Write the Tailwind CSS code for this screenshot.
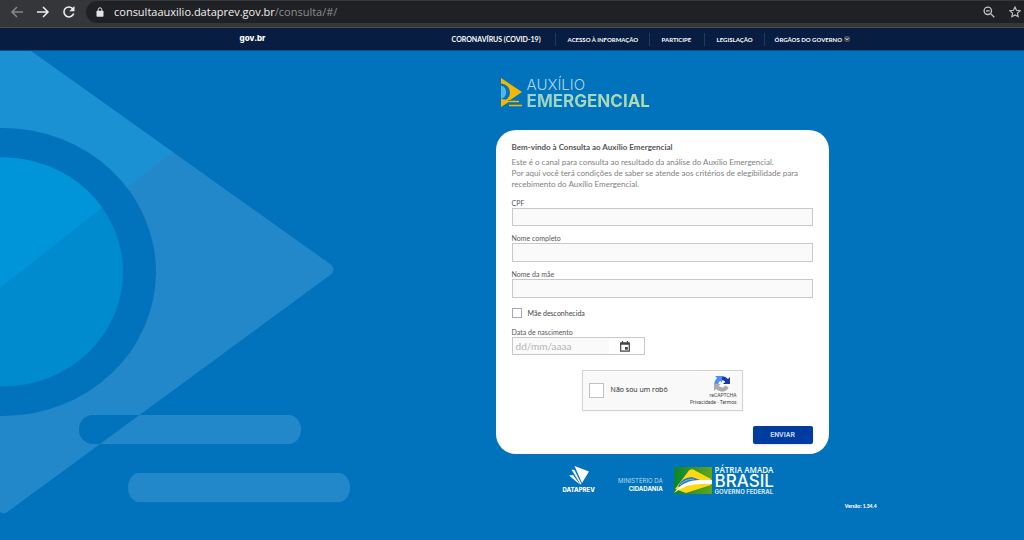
<!DOCTYPE html>
<html lang="pt-BR">
<head>
<meta charset="utf-8">
<title>Consulta Auxílio Emergencial</title>
<script src="https://cdn.jsdelivr.net/npm/@tailwindcss/browser@4"></script>
</head>
<body class="flex min-h-screen flex-col bg-[#0073bc] font-['Lato',sans-serif] text-[#555]">
<!-- Browser toolbar -->
<div class="flex h-7 shrink-0 items-center border-b border-[#4a4b4e] bg-[#35363a] pb-1 pl-2.5">
  <div class="flex w-[76px] shrink-0 items-center gap-3">
    <button aria-label="Voltar" class="text-[#85878a]"><svg class="h-3.5 w-3.5" viewBox="0 0 14 14" fill="none" stroke="currentColor" stroke-width="1.5"><path d="M13 7H2M7 2L2 7l5 5"/></svg></button>
    <button aria-label="Avançar" class="text-[#eeeeef]"><svg class="h-3.5 w-3.5" viewBox="0 0 14 14" fill="none" stroke="currentColor" stroke-width="1.5"><path d="M1 7h11M7 2l5 5-5 5"/></svg></button>
    <button aria-label="Recarregar" class="text-[#eeeeef]"><svg class="h-3.5 w-3.5" viewBox="0 0 14 14"><path d="M11 4A5 5 0 1 0 11.700 8.500" fill="none" stroke="currentColor" stroke-width="1.600"/><path d="M12.500 1v5.200H7.300z" fill="currentColor"/></svg></button>
  </div>
  <div class="flex h-[22px] flex-1 items-center gap-2.5 rounded-l-full bg-[#202124] pl-2.5 pr-[3px]">
    <svg class="h-2.5 w-2 shrink-0 text-[#e3e4e6]" viewBox="0 0 8 10"><path d="M2.200 4V2.600a1.800 1.800 0 0 1 3.600 0V4" fill="none" stroke="currentColor"/><rect x="0.500" y="3.700" width="7" height="6" rx="0.800" fill="currentColor"/></svg>
    <p class="flex-1 font-['Open_Sans',sans-serif] text-[11px] leading-4 text-[#8b8d91]"><span class="text-[#f1f1f2]">consultaauxilio.dataprev.gov.br</span>/consulta/#/</p>
    <button aria-label="Zoom" class="mr-1 text-[#c2c4c7]"><svg class="h-3 w-3" viewBox="0 0 12 12" fill="none" stroke="currentColor" stroke-width="1.300"><circle cx="4.800" cy="4.800" r="3.700"/><path d="M7.600 7.600L11.300 11.300M3 4.800h3.600"/></svg></button>
    <button aria-label="Favoritar" class="text-[#c2c4c7]"><svg class="h-3 w-3" viewBox="0 0 12 12" fill="none" stroke="currentColor" stroke-width="1.100"><path d="M6 1l1.500 3.300 3.600.4-2.700 2.400.8 3.600L6 8.900l-3.200 1.800.8-3.600L.9 4.700l3.600-.4z"/></svg></button>
  </div>
</div>

<!-- Government bar -->
<header class="flex h-[23px] shrink-0 items-center border-b border-[#05508e] bg-[#071d41] pl-[23.4%] text-white">
  <a href="#" class="w-[212px] shrink-0 pb-0.5 font-['Inter',sans-serif] text-[8px] font-extrabold">gov.br</a>
  <nav class="flex items-center text-[6px] font-bold whitespace-nowrap">
    <a href="#" class="w-[103px] text-[7px]">CORONAVÍRUS (COVID-19)</a>
    <a href="#" class="w-[94px] border-l border-[#25395a] py-0.5 pl-3">ACESSO À INFORMAÇÃO</a>
    <a href="#" class="w-[55px] border-l border-[#25395a] py-0.5 pl-3">PARTICIPE</a>
    <a href="#" class="w-[60px] border-l border-[#25395a] py-0.5 pl-3">LEGISLAÇÃO</a>
    <a href="#" class="flex items-center gap-0.5 border-l border-[#25395a] py-0.5 pl-2.5">ÓRGÃOS DO GOVERNO
      <svg class="h-1.5 w-1.5" viewBox="0 0 6 6"><rect width="6" height="6" rx="2" fill="#494b4e"/><path d="M1.500 2.200L3 3.900l1.500-1.700" fill="none" stroke="#ddd"/></svg></a>
  </nav>
</header>

<div class="relative flex-1">
  <!-- Decorative emblem -->
  <svg class="absolute left-0 top-0 h-[489px] w-[360px]" viewBox="0 51 360 489" aria-hidden="true">
    <defs>
      <path id="arrow" d="M0 29L331.500 265Q335.500 269.500 331.500 274L8 511.500Q4 515 0 512z"/>
      <clipPath id="inArrow"><use href="#arrow"/></clipPath>
      <clipPath id="upper"><path d="M0 0H366L0 288z"/></clipPath>
    </defs>
    <use href="#arrow" fill="#2288ca"/>
    <g clip-path="url(#upper)"><use href="#arrow" fill="#1991d3"/></g>
    <ellipse cx="3" cy="272" rx="153" ry="144" fill="#0073bc"/>
    <ellipse cx="3" cy="272" rx="120" ry="114.500" fill="#008bcf"/>
    <ellipse cx="3" cy="272" rx="120" ry="114.500" fill="#0094d9" clip-path="url(#upper)"/>
    <rect x="79" y="415" width="222" height="29" rx="12" ry="14.500" fill="#2288ca"/>
    <rect x="79" y="415" width="222" height="29" rx="14" fill="#0073bc" clip-path="url(#inArrow)"/>
    <rect x="128" y="473" width="222" height="29" rx="11" ry="14.500" fill="#2288ca"/>
  </svg>

  <main class="relative pl-[48.4%] pt-[25px]">
    <div class="flex h-8 items-center gap-[5px] pl-[5px]">
      <svg class="h-[30px] w-[21px] shrink-0" viewBox="0 0 21 30"><path d="M0 1L21 15 7 24.500H0z" fill="#f5b800"/><path d="M0 6.500a9 9 0 0 1 0 18z" fill="#0073bc"/><path d="M0 8.500a7 7 0 0 1 0 13.500z" fill="#52b5e9"/><path d="M0 22L10 23.500 0 30z" fill="#f5b800"/><path d="M7 24.500h11M8 28.500h13" stroke="#0073bc" stroke-width="3"/><path d="M7 24.500h11M8 28.500h13" stroke="#f5b800" stroke-width="1.400"/></svg>
      <h1 class="pt-px font-['Inter',sans-serif] text-[15px] leading-[17px] text-[#a9d9ea]"><span class="block font-light">AUXÍLIO</span><span class="block bg-linear-to-r from-[#9ad4c6] to-[#b5dcaa] bg-clip-text text-[17px] font-bold text-transparent">EMERGENCIAL</span></h1>
    </div>

    <form class="mt-[22px] w-full max-w-[333px] rounded-[20px] bg-white px-4 pt-3 pb-2.5" onsubmit="return false">
      <h2 class="text-[8px] leading-[10px] font-bold text-[#555]">Bem-vindo à Consulta ao Auxílio Emergencial</h2>
      <p class="mt-[5px] text-[8px] leading-[11px] text-[#808080]">Este é o canal para consulta ao resultado da análise do Auxílio Emergencial.<br>Por aqui você terá condições de saber se atende aos critérios de elegibilidade para<br>recebimento do Auxílio Emergencial.</p>
      <div class="mt-[9px] flex flex-col gap-2 text-[7px] leading-[9px]">
        <div><label for="cpf" class="block">CPF</label><input id="cpf" class="block h-[18px] w-full border border-[#c8c8c8] bg-[#fafafa] px-1 text-[9px]"></div>
        <div><label for="nome" class="block">Nome completo</label><input id="nome" class="block h-[19px] w-full border border-[#c8c8c8] bg-[#fafafa] px-1 text-[9px]"></div>
        <div><label for="mae" class="block">Nome da mãe</label><input id="mae" class="block h-[19px] w-full border border-[#c8c8c8] bg-[#fafafa] px-1 text-[9px]"></div>
      </div>
      <div class="mt-2.5 flex h-2.5 items-center gap-1.5 text-[7px] text-[#444]">
        <input id="desc" type="checkbox" class="h-2.5 w-2.5 appearance-none border border-[#aaa] bg-white"><label for="desc">Mãe desconhecida</label>
      </div>
      <label for="data" class="mt-2.5 block text-[7px] leading-[9px]">Data de nascimento</label>
      <div class="flex h-[18px] w-[133px] border border-[#c8c8c8]">
        <input id="data" placeholder="dd/mm/aaaa" class="w-24 bg-[#fafafa] pl-[3px] text-[10px] placeholder:text-[#b3b3b3]">
        <button type="button" aria-label="Abrir calendário" class="flex flex-1 items-center justify-center pr-[3px]"><svg class="h-[11px] w-2.5" viewBox="0 0 10 11"><path d="M.7 2h8.600v8.200H.7zM2.500 0v2M7.500 0v2" fill="none" stroke="#444" stroke-width="1.200"/><path d="M.5 1.500h9v2.200h-9zM5 6h2.800v2.700H5z" fill="#444"/></svg></button>
      </div>
      <div class="mx-auto mt-[15px] flex h-[41px] w-[161px] items-center border border-[#d3d3d3] bg-[#f9f9f9] pl-1.5 pr-[5px] font-['Roboto',sans-serif] shadow-xs">
        <input id="robo" type="checkbox" class="h-[15px] w-[15px] shrink-0 appearance-none border border-[#c1c1c1] bg-white"><label for="robo" class="ml-[7px] flex-1 font-['Open_Sans',sans-serif] text-[7px] whitespace-nowrap text-[#222]">Não sou um robô</label>
        <div class="flex flex-col items-end text-[5px] leading-[7px] text-[#444]">
          <svg class="mr-[7px] h-4 w-4" viewBox="0 0 16 16" fill="none" stroke-width="4"><path d="M2.300 8A5.700 5.700 0 0 1 8 2.300" stroke="#4a90f5"/><path d="M8 2.300A5.700 5.700 0 0 1 13.700 8" stroke="#1c3aa9"/><path d="M13 10.500A5.700 5.700 0 0 1 2.300 8" stroke="#ababab"/><path d="M16 1v7H9z" fill="#1c3aa9"/><path d="M1 0H8v6.500z" fill="#4a90f5"/><path d="M0 15V8h6.500z" fill="#ababab"/></svg>
          <span>reCAPTCHA</span>
          <span><a href="#">Privacidade</a> - <a href="#">Termos</a></span>
        </div>
      </div>
      <button type="submit" class="mt-[15px] ml-auto block h-[18px] w-[60px] rounded-xs bg-[#003b9f] font-['Roboto',sans-serif] text-[7px] font-bold text-[#c5d4f0] shadow-sm">ENVIAR</button>
    </form>

    <footer class="mt-3 w-full max-w-[381px] text-white">
      <div class="flex items-center pl-[65px]">
        <div class="flex w-[36px] flex-col items-center">
          <svg class="h-5 w-5" viewBox="0 0 20 20" fill="#fff"><path d="M5.500 0L20 5.500 13 17zM2.500 3.500l3 .5L12.500 18l-1 .5zM0 9.500l4-.5 7.500 10z"/></svg>
          <span class="font-['Inter',sans-serif] text-[6px] leading-2 font-extrabold">DATAPREV</span>
        </div>
        <p class="ml-[18px] w-12 pt-2.5 text-right font-['Inter',sans-serif] text-[6px] leading-2 whitespace-nowrap text-[#b9d9ee]">MINISTÉRIO DA<br><b class="text-white">CIDADANIA</b></p>
        <svg class="ml-[11px] h-[27px] w-[38px] shrink-0" viewBox="0 0 38 27"><defs><linearGradient id="g"><stop stop-color="#08852f"/><stop offset="1" stop-color="#62a51f"/></linearGradient></defs><path d="M0 0h38v27H0z" fill="url(#g)"/><path d="M1 22L15 3.500Q18 1 21 3.500L37 12v6L12 26z" fill="#ffd814"/><path d="M4 20Q8 10 18 10l8 3-12 6z" fill="#1a79bd"/><path d="M0 26Q9 13 26 13H38v4H28Q11 17 0 26z" fill="#fff"/><path d="M6 18q5-6 14-6" fill="none" stroke="#79bde5"/></svg>
        <div class="ml-[3px] whitespace-nowrap">
          <p class="font-['Open_Sans',sans-serif] text-[8px] leading-2 font-semibold">PÁTRIA AMADA</p>
          <p class="font-['Inter',sans-serif] text-[17px] leading-[15px] font-medium">BRASIL</p>
          <p class="font-['Inter',sans-serif] text-[6px] leading-[5px] font-bold text-[#d4e7f3]">GOVERNO FEDERAL</p>
        </div>
      </div>
      <p class="mt-[9px] text-right text-[5px] leading-[7px] font-black">Versão: 1.34.4</p>
    </footer>
  </main>
</div>
</body>
</html>
